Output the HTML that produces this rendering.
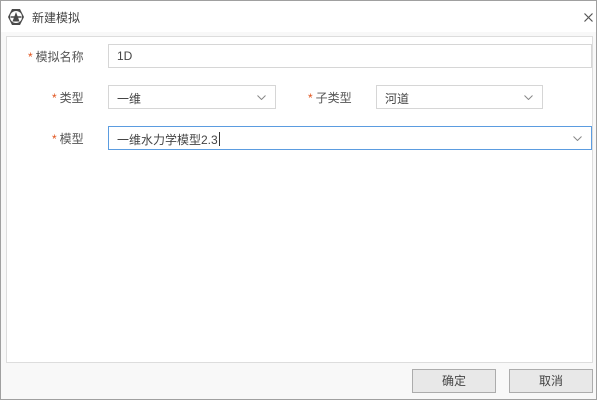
<!DOCTYPE html>
<html><head><meta charset="utf-8"><style>
*{box-sizing:border-box;margin:0;padding:0}
body{width:600px;height:400px;background:#fff;font-family:"Liberation Sans","Noto Sans CJK SC",sans-serif;font-size:12px;color:#333;position:relative;overflow:hidden}
.win{position:absolute;left:0;top:0;width:597px;height:400px;border:1px solid #a0a0a0;background:#f8f8f8}
.title{position:absolute;left:0;top:0;width:595px;height:31px;background:#fff}
.title span{position:absolute;left:31px;top:8px;font-size:12px;color:#444}
.panel{position:absolute;left:6px;top:36px;width:587px;height:327px;background:#fff;border:1px solid #ddd}
.a{position:absolute;font-size:12px;color:#555}
.a b{color:#e0531c;font-weight:normal;margin-right:3px}
.in{position:absolute;border:1px solid #d6d6d6;height:24px;padding:4px 8px;color:#444;font-size:12px;background:#fff}
.in svg{position:absolute;right:9px;top:9px}
.btn{position:absolute;top:369px;width:84px;height:24px;border:1px solid #acacac;background:#e8e8e8;text-align:center;line-height:22px;font-size:12px;color:#444}
</style></head><body>
<div class="win">
<div class="title">
<svg style="position:absolute;left:6px;top:7px" width="18" height="18" viewBox="0 0 18 18"><polygon points="5,1 13,1 17,9 13,17 5,17 1,9" fill="#4a4a4a"/><circle cx="9" cy="9" r="6" fill="#fff"/><path d="M3.5 9h11" stroke="#4a4a4a" stroke-width="1.5"/><polygon points="9,4 12.5,13.5 5.5,13.5" fill="#4a4a4a"/></svg>
<span>新建模拟</span>
<svg style="position:absolute;left:583px;top:12px" width="9" height="9" viewBox="0 0 9 9"><path d="M0.5 0.5L8.5 8.5M8.5 0.5L0.5 8.5" stroke="#555" stroke-width="1.2"/></svg>
</div>
</div>
<div class="panel"></div>
<div class="a" style="left:28px;top:48px"><b>*</b>模拟名称</div>
<div class="in" style="left:108px;top:44px;width:484px">1D</div>
<div class="a" style="left:52px;top:89px"><b>*</b>类型</div>
<div class="in" style="left:108px;top:85px;width:168px">一维<svg width="9" height="5" viewBox="0 0 9 5"><path d="M0.5 0.5L4.5 4.5L8.5 0.5" stroke="#888" fill="none"/></svg></div>
<div class="a" style="left:308px;top:89px"><b>*</b>子类型</div>
<div class="in" style="left:376px;top:85px;width:167px">河道<svg width="9" height="5" viewBox="0 0 9 5"><path d="M0.5 0.5L4.5 4.5L8.5 0.5" stroke="#888" fill="none"/></svg></div>
<div class="a" style="left:52px;top:130px"><b>*</b>模型</div>
<div class="in" style="left:108px;top:126px;width:484px;border-color:#5b9ce0">一维水力学模型2.3<span style="display:inline-block;width:1px;height:14px;background:#333;vertical-align:-2px;margin-left:1px"></span><svg width="9" height="5" viewBox="0 0 9 5"><path d="M0.5 0.5L4.5 4.5L8.5 0.5" stroke="#888" fill="none"/></svg></div>
<div class="btn" style="left:412px">确定</div>
<div class="btn" style="left:509px">取消</div>
</body></html>
